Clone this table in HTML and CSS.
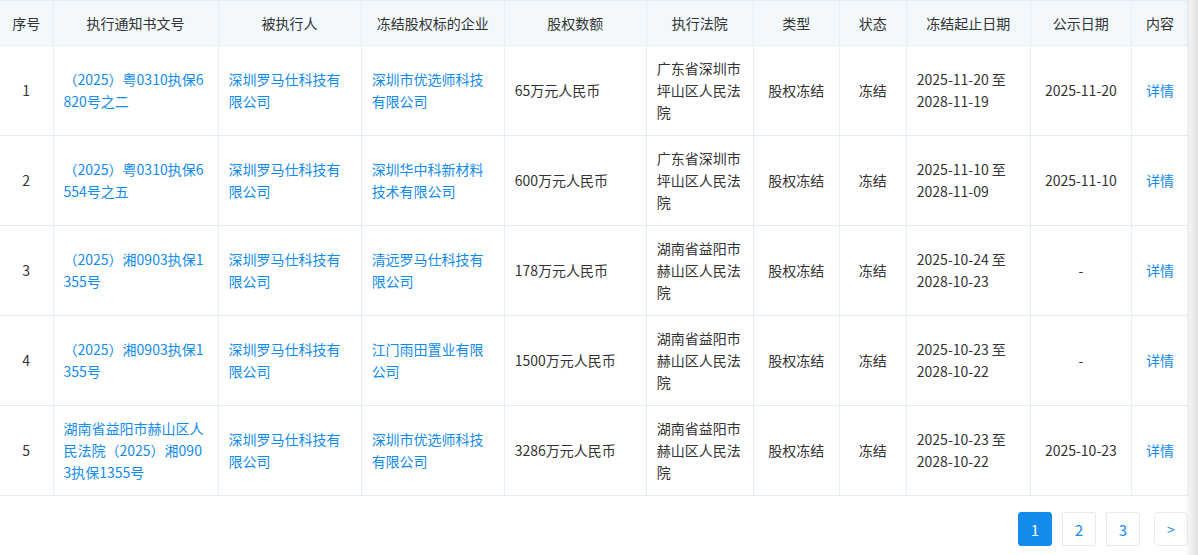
FILE: index.html
```html
<!DOCTYPE html>
<html lang="zh-CN">
<head>
<meta charset="utf-8">
<link rel="stylesheet" href="styles.css">
</head>
<body>
<div class="page">
  <table class="grid">
    <colgroup>
      <col style="width:53px"><col style="width:165px"><col style="width:143px"><col style="width:143px"><col style="width:142px"><col style="width:107px"><col style="width:86px"><col style="width:67px"><col style="width:124px"><col style="width:101px"><col style="width:57px">
    </colgroup>
    <thead>
      <tr>
        <th>序号</th><th>执行通知书文号</th><th>被执行人</th><th>冻结股权标的企业</th><th>股权数额</th><th>执行法院</th><th>类型</th><th>状态</th><th>冻结起止日期</th><th>公示日期</th><th>内容</th>
      </tr>
    </thead>
    <tbody>
      <tr>
        <td class="c">1</td>
        <td><a class="lnk">（2025）粤0310执保6820号之二</a></td>
        <td><a class="lnk">深圳罗马仕科技有限公司</a></td>
        <td><a class="lnk">深圳市优选师科技有限公司</a></td>
        <td>65万元人民币</td>
        <td>广东省深圳市坪山区人民法院</td>
        <td class="c">股权冻结</td>
        <td class="c">冻结</td>
        <td class="date">2025-11-20 至 2028-11-19</td>
        <td class="c">2025-11-20</td>
        <td class="c"><a class="lnk">详情</a></td>
      </tr>
      <tr>
        <td class="c">2</td>
        <td><a class="lnk">（2025）粤0310执保6554号之五</a></td>
        <td><a class="lnk">深圳罗马仕科技有限公司</a></td>
        <td><a class="lnk">深圳华中科新材料技术有限公司</a></td>
        <td>600万元人民币</td>
        <td>广东省深圳市坪山区人民法院</td>
        <td class="c">股权冻结</td>
        <td class="c">冻结</td>
        <td class="date">2025-11-10 至 2028-11-09</td>
        <td class="c">2025-11-10</td>
        <td class="c"><a class="lnk">详情</a></td>
      </tr>
      <tr>
        <td class="c">3</td>
        <td><a class="lnk">（2025）湘0903执保1355号</a></td>
        <td><a class="lnk">深圳罗马仕科技有限公司</a></td>
        <td><a class="lnk">清远罗马仕科技有限公司</a></td>
        <td>178万元人民币</td>
        <td>湖南省益阳市赫山区人民法院</td>
        <td class="c">股权冻结</td>
        <td class="c">冻结</td>
        <td class="date">2025-10-24 至 2028-10-23</td>
        <td class="c">-</td>
        <td class="c"><a class="lnk">详情</a></td>
      </tr>
      <tr>
        <td class="c">4</td>
        <td><a class="lnk">（2025）湘0903执保1355号</a></td>
        <td><a class="lnk">深圳罗马仕科技有限公司</a></td>
        <td><a class="lnk">江门雨田置业有限公司</a></td>
        <td>1500万元人民币</td>
        <td>湖南省益阳市赫山区人民法院</td>
        <td class="c">股权冻结</td>
        <td class="c">冻结</td>
        <td class="date">2025-10-23 至 2028-10-22</td>
        <td class="c">-</td>
        <td class="c"><a class="lnk">详情</a></td>
      </tr>
      <tr>
        <td class="c">5</td>
        <td><a class="lnk">湖南省益阳市赫山区人民法院（2025）湘0903执保1355号</a></td>
        <td><a class="lnk">深圳罗马仕科技有限公司</a></td>
        <td><a class="lnk">深圳市优选师科技有限公司</a></td>
        <td>3286万元人民币</td>
        <td>湖南省益阳市赫山区人民法院</td>
        <td class="c">股权冻结</td>
        <td class="c">冻结</td>
        <td class="date">2025-10-23 至 2028-10-22</td>
        <td class="c">2025-10-23</td>
        <td class="c"><a class="lnk">详情</a></td>
      </tr>
    </tbody>
  </table>
  <div class="pager">
    <span class="pg active">1</span>
    <span class="pg">2</span>
    <span class="pg">3</span>
    <span class="pg next">&gt;</span>
  </div>
  <div class="edge-shadow"></div>
</div>
</body>
</html>
```

FILE: styles.css
```css
html, body {
  margin: 0;
  padding: 0;
  background: #fff;
}
body {
  font-family: "Noto Sans CJK SC", "Noto Sans", sans-serif;
  font-size: 14px;
  color: #333;
}
.page {
  position: relative;
  width: 1198px;
  height: 555px;
  overflow: hidden;
}
.grid {
  border-collapse: collapse;
  table-layout: fixed;
  width: 1189px;
  margin-left: 0;
}
.grid th, .grid td {
  border: 1px solid #e4eef6;
  line-height: 22px;
  padding: 0 10px;
  word-break: break-all;
}
.grid tr > :first-child {
  border-left: none;
}
.grid th {
  background: #f2f8fc;
  height: 44px;
  font-weight: normal;
  text-align: center;
  color: #333;
  padding: 0 4px;
}
.grid td {
  height: 87px;
  padding-bottom: 2px;
  text-align: left;
  vertical-align: middle;
}
.grid td.c {
  text-align: center;
}
.grid td.date {
  word-break: normal;
}
.lnk {
  color: #128bed;
  text-decoration: none;
}
.pager {
  display: flex;
  justify-content: flex-end;
  gap: 10px;
  width: 1188px;
  margin-top: 16px;
}
.pg {
  width: 32px;
  height: 32px;
  border: 1px solid #eaeaea;
  border-radius: 2px;
  display: flex;
  align-items: center;
  justify-content: center;
  color: #128bed;
  font-size: 15px;
  background: #fff;
}
.pg.active {
  background: #128bed;
  border-color: #128bed;
  color: #fff;
  border-radius: 3px;
}
.pg.next {
  margin-left: 4px;
  border-radius: 4px;
  font-size: 14px;
}
.edge-shadow {
  position: absolute;
  top: 0;
  right: 0;
  width: 14px;
  height: 100%;
  background: linear-gradient(to right, rgba(200,200,200,0), rgba(200,200,200,0.55));
  pointer-events: none;
}
```
